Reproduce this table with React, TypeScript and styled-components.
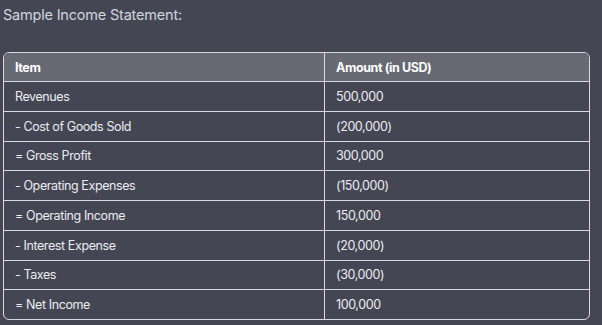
import { createGlobalStyle } from "styled-components";
import styled from "styled-components";

const Global = createGlobalStyle`
  html, body {
    margin: 0;
    background: #444654;
  }
  body {
    font-family: Inter, "Liberation Sans", sans-serif;
    color: #ececf1;
  }
`;

const Page = styled.div`
  width: 602px;
  height: 325px;
  box-sizing: border-box;
  padding: 5px 12px 0 3px;
  background: #444654;
  overflow: hidden;
`;

const Title = styled.p`
  margin: 0;
  font-size: 14.5px;
  line-height: 20px;
  letter-spacing: -0.2px;
  color: #d1d5db;
`;

const Table = styled.table`
  margin-top: 27px;
  width: 587px;
  table-layout: fixed;
  border-collapse: separate;
  border-spacing: 0;
  border: 1px solid #d9d9e3;
  border-radius: 6px;
  font-size: 12.5px;
  letter-spacing: -0.4px;
`;

const Col = styled.col<{ $w?: number }>`
  width: ${(p) => (p.$w ? `${p.$w}px` : "auto")};
`;

const Th = styled.th<{ $first?: boolean }>`
  text-align: left;
  font-weight: 700;
  color: #fff;
  background: #676973;
  height: 28px;
  padding: 0 11px;
  border-bottom: 1px solid #d9d9e3;
  border-left: ${(p) => (p.$first ? "none" : "1px solid #d9d9e3")};
  border-top-left-radius: ${(p) => (p.$first ? "5px" : "0")};
  border-top-right-radius: ${(p) => (p.$first ? "0" : "5px")};
`;

const Td = styled.td<{ $first?: boolean; $last?: boolean }>`
  height: 28.75px;
  padding: 0 11px;
  color: #ececf1;
  border-bottom: ${(p) => (p.$last ? "none" : "1px solid #d9d9e3")};
  border-left: ${(p) => (p.$first ? "none" : "1px solid #d9d9e3")};
`;

const rows: [string, string][] = [
  ["Revenues", "500,000"],
  ["- Cost of Goods Sold", "(200,000)"],
  ["= Gross Profit", "300,000"],
  ["- Operating Expenses", "(150,000)"],
  ["= Operating Income", "150,000"],
  ["- Interest Expense", "(20,000)"],
  ["- Taxes", "(30,000)"],
  ["= Net Income", "100,000"],
];

export default function App() {
  return (
    <>
      <Global />
      <Page>
        <Title>Sample Income Statement:</Title>
        <Table>
          <colgroup>
            <Col $w={320} />
            <Col />
          </colgroup>
          <thead>
            <tr>
              <Th $first>Item</Th>
              <Th>Amount (in USD)</Th>
            </tr>
          </thead>
          <tbody>
            {rows.map(([item, amount], i) => (
              <tr key={item}>
                <Td $first $last={i === rows.length - 1}>
                  {item}
                </Td>
                <Td $last={i === rows.length - 1}>{amount}</Td>
              </tr>
            ))}
          </tbody>
        </Table>
      </Page>
    </>
  );
}
